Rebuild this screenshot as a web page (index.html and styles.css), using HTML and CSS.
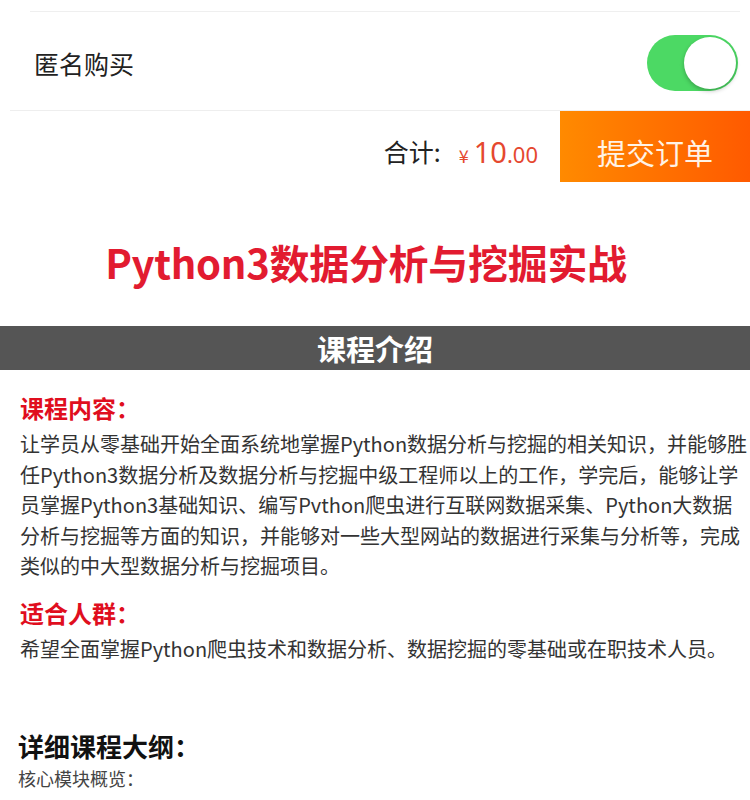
FILE: index.html
```html
<!DOCTYPE html>
<html lang="zh-CN">
<head>
<meta charset="utf-8">
<title>Python3数据分析与挖掘实战</title>
<link rel="stylesheet" href="styles.css">
</head>
<body>
<div class="page">
  <div class="top-strip"><div class="top-line"></div></div>
  <div class="anon-row">
    <span class="anon-label">匿名购买</span>
    <span class="toggle"><span class="knob"></span></span>
  </div>
  <div class="submit-bar">
    <div class="total">
      <span class="total-label">合计:</span>
      <span class="price"><span class="yen">¥</span><span class="int">10</span><span class="dec">.00</span></span>
    </div>
    <div class="submit-btn">提交订单</div>
  </div>
  <div class="title-block">
    <h1 class="course-title">Python3数据分析与挖掘实战</h1>
  </div>
  <div class="section-bar">课程介绍</div>
  <div class="content">
    <h3 class="sub-head">课程内容：</h3>
    <p class="para">让学员从零基础开始全面系统地掌握Python数据分析与挖掘的相关知识，并能够胜任Python3数据分析及数据分析与挖掘中级工程师以上的工作，学完后，能够让学员掌握Python3基础知识、编写Pvthon爬虫进行互联网数据采集、Python大数据分析与挖掘等方面的知识，并能够对一些大型网站的数据进行采集与分析等，完成类似的中大型数据分析与挖掘项目。</p>
    <h3 class="sub-head sub-head-2">适合人群：</h3>
    <p class="para">希望全面掌握Python爬虫技术和数据分析、数据挖掘的零基础或在职技术人员。</p>
    <h2 class="outline-head">详细课程大纲：</h2>
    <p class="outline-sub">核心模块概览：</p>
  </div>
</div>
</body>
</html>
```
FILE: styles.css
```css
* { box-sizing: border-box; }
html, body { margin: 0; padding: 0; background: #fff; }
body {
  font-family: "Noto Sans CJK SC", "Noto Sans", sans-serif;
  color: #333;
}
.page { width: 750px; }

.top-strip { height: 12px; display: flex; align-items: flex-end; }
.top-line { height: 1px; background: #efefef; margin-left: 30px; width: 710px; }

.anon-row {
  height: 99px;
  margin-left: 10px;
  border-bottom: 1px solid #eeeeee;
  display: flex;
  align-items: center;
  justify-content: space-between;
  padding-left: 24px;
  padding-right: 12px;
  padding-top: 4px;
}
.anon-label { font-size: 25px; color: #222; }
.toggle {
  width: 91px; height: 56px; border-radius: 28px;
  background: #4cd964;
  position: relative;
  display: inline-block;
}
.knob {
  position: absolute; right: 2px; top: 2px;
  width: 52px; height: 52px; border-radius: 50%;
  background: #fff;
  box-shadow: 0 2px 4px rgba(0,0,0,0.25);
}

.submit-bar {
  height: 72px;
  display: flex;
  justify-content: flex-end;
  align-items: stretch;
}
.total { display: flex; align-items: center; padding-right: 22px; padding-top: 8px; }
.total-label { font-size: 25px; color: #222; margin-right: 18px; }
.price { color: #e5482f; display: flex; align-items: baseline; }
.yen { font-size: 18px; margin-right: 5px; }
.int { font-size: 29px; font-family: "Noto Sans", sans-serif; }
.dec { font-size: 22px; font-family: "Noto Sans", sans-serif; }
.submit-btn {
  width: 190px;
  background: linear-gradient(90deg, #ff8a00, #ff5a00);
  color: #fff3e6;
  font-size: 29px;
  display: flex; align-items: center; justify-content: center;
  margin-bottom: 1px;
  padding-top: 10px;
}

.title-block { height: 143px; padding-top: 52px; padding-right: 18px; }
.course-title {
  margin: 0;
  text-align: center;
  color: #e21b30;
  font-size: 40px;
  font-weight: 700;
  line-height: 54px;
  letter-spacing: -0.3px;
}

.section-bar {
  height: 44px;
  background: #555;
  color: #fff;
  font-size: 29px;
  font-weight: 700;
  text-align: center;
  line-height: 44px;
}

.content { padding: 23px 0 0 20px; width: 750px; }
.sub-head {
  margin: 0;
  color: #e00e1e;
  font-size: 24px;
  font-weight: 700;
  line-height: 30px;
}
.sub-head-2 { margin-top: 16px; }
.para {
  margin: 6px 0 0 0;
  width: 730px;
  font-size: 20px;
  line-height: 30.5px;
  color: #333;
}
.outline-head {
  margin: 64px 0 0 -2px;
  font-size: 26px;
  font-weight: 700;
  color: #111;
  line-height: 36px;
}
.outline-sub {
  margin: 0 0 0 -2px;
  font-size: 18px;
  line-height: 28px;
  color: #444;
}
```
